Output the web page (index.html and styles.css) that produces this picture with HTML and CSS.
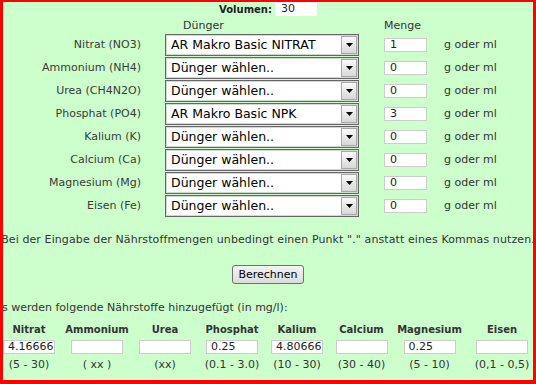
FILE: index.html
```html
<!DOCTYPE html>
<html lang="de">
<head>
    <meta charset="UTF-8">
    <title>Dünger Rechner</title>
    <link rel="stylesheet" href="styles.css">
</head>
<body>
    <div class="frame">
        <div class="volume">
            <b>Volumen:</b>
            <span class="field vol">30</span>
        </div>

        <div class="dosing">
            <div></div>
            <div class="head head-fert">Dünger</div>
            <div class="head">Menge</div>
            <div></div>

            <div class="label">Nitrat (NO3)</div>
            <div class="select"><span>AR Makro Basic NITRAT</span><span class="arrow"><svg width="7" height="4" viewBox="0 0 7 4"><path d="M0 0h7L3.5 4z" fill="#000"/></svg></span></div>
            <div class="field qty">1</div>
            <div class="unit">g oder ml</div>

            <div class="label">Ammonium (NH4)</div>
            <div class="select"><span>Dünger wählen..</span><span class="arrow"><svg width="7" height="4" viewBox="0 0 7 4"><path d="M0 0h7L3.5 4z" fill="#000"/></svg></span></div>
            <div class="field qty">0</div>
            <div class="unit">g oder ml</div>

            <div class="label">Urea (CH4N2O)</div>
            <div class="select"><span>Dünger wählen..</span><span class="arrow"><svg width="7" height="4" viewBox="0 0 7 4"><path d="M0 0h7L3.5 4z" fill="#000"/></svg></span></div>
            <div class="field qty">0</div>
            <div class="unit">g oder ml</div>

            <div class="label">Phosphat (PO4)</div>
            <div class="select"><span>AR Makro Basic NPK</span><span class="arrow"><svg width="7" height="4" viewBox="0 0 7 4"><path d="M0 0h7L3.5 4z" fill="#000"/></svg></span></div>
            <div class="field qty">3</div>
            <div class="unit">g oder ml</div>

            <div class="label">Kalium (K)</div>
            <div class="select"><span>Dünger wählen..</span><span class="arrow"><svg width="7" height="4" viewBox="0 0 7 4"><path d="M0 0h7L3.5 4z" fill="#000"/></svg></span></div>
            <div class="field qty">0</div>
            <div class="unit">g oder ml</div>

            <div class="label">Calcium (Ca)</div>
            <div class="select"><span>Dünger wählen..</span><span class="arrow"><svg width="7" height="4" viewBox="0 0 7 4"><path d="M0 0h7L3.5 4z" fill="#000"/></svg></span></div>
            <div class="field qty">0</div>
            <div class="unit">g oder ml</div>

            <div class="label">Magnesium (Mg)</div>
            <div class="select"><span>Dünger wählen..</span><span class="arrow"><svg width="7" height="4" viewBox="0 0 7 4"><path d="M0 0h7L3.5 4z" fill="#000"/></svg></span></div>
            <div class="field qty">0</div>
            <div class="unit">g oder ml</div>

            <div class="label">Eisen (Fe)</div>
            <div class="select"><span>Dünger wählen..</span><span class="arrow"><svg width="7" height="4" viewBox="0 0 7 4"><path d="M0 0h7L3.5 4z" fill="#000"/></svg></span></div>
            <div class="field qty">0</div>
            <div class="unit">g oder ml</div>
        </div>

        <div class="note"><span>Bei der Eingabe der Nährstoffmengen unbedingt einen Punkt "." anstatt eines Kommas nutzen.</span></div>

        <div class="actions"><button class="btn">Berechnen</button></div>

        <div class="result">
            <p class="intro">Es werden folgende Nährstoffe hinzugefügt (in mg/l):</p>
            <div class="values">
                <div class="col"><b>Nitrat</b><span class="field out">4.16666</span><span>(5 - 30)</span></div>
                <div class="col"><b>Ammonium</b><span class="field out"></span><span>( xx )</span></div>
                <div class="col"><b>Urea</b><span class="field out"></span><span>(xx)</span></div>
                <div class="col"><b>Phosphat</b><span class="field out">0.25</span><span>(0.1 - 3.0)</span></div>
                <div class="col"><b>Kalium</b><span class="field out">4.80666</span><span>(10 - 30)</span></div>
                <div class="col"><b>Calcium</b><span class="field out"></span><span>(30 - 40)</span></div>
                <div class="col"><b>Magnesium</b><span class="field out">0.25</span><span>(5 - 10)</span></div>
                <div class="col"><b>Eisen</b><span class="field out"></span><span>(0,1 - 0,5)</span></div>
            </div>
        </div>
    </div>
</body>
</html>
```

FILE: styles.css
```css
body { margin: 0; font-family: "DejaVu Sans", Verdana, sans-serif; font-size: 11px; color: #333; }
.frame { width: 536px; height: 384px; box-sizing: border-box; border: 3px solid #f00; border-top-width: 2px; border-bottom-width: 4px; background: #ccffcc; overflow: hidden; }

.field { display: block; box-sizing: border-box; height: 14px; background: #fff; border: 1px solid #ccc; padding: 0 5px; line-height: 12px; font-size: 11px; color: #222; white-space: nowrap; overflow: hidden; }

.volume { display: flex; justify-content: center; align-items: center; gap: 3px; height: 14px; color: #222; }
.volume b { font-size: 10px; }
.volume .vol { width: 42px; border-color: #fff; }

.dosing { display: grid; grid-template-columns: 162px 219px 60px auto; grid-template-rows: 17px; grid-auto-rows: 23px; align-items: center; }
.dosing .head { align-self: end; line-height: 14px; }
.dosing .head-fert { padding-left: 18px; }
.label { text-align: right; padding-right: 24px; color: #3a3a3a; }
.select { display: flex; align-items: center; justify-content: space-between; box-sizing: border-box; width: 194px; height: 22px; background: #fff; border: 1px solid #666; box-shadow: inset 0 0 0 1px #d6d6d6; font-size: 12.5px; color: #000; padding-left: 5px; }
.arrow { display: flex; align-items: center; justify-content: center; box-sizing: border-box; width: 16px; height: 18px; margin-right: 1px; border: 1px solid #a8a8a8; background: linear-gradient(#fafafa, #d8d8d8); }
.qty { width: 43px; }

.note { display: flex; justify-content: center; white-space: nowrap; letter-spacing: 0.1px; margin-top: 16px; }
.actions { display: flex; justify-content: center; margin-top: 19px; }
.btn { font-family: inherit; font-size: 11px; color: #000; height: 19px; padding: 0 5px; border: 1px solid #707070; border-radius: 3px; background: linear-gradient(#f4f4f4, #dcdcdc); }

.result { margin-left: -8px; margin-top: 17px; }
.intro { margin: 0; }
.values { display: grid; grid-template-columns: 68px 68px 68px 66px 64px 65px 71px 74px; margin-top: 10px; }
.col { display: flex; flex-direction: column; align-items: center; white-space: nowrap; }
.col b { font-size: 10px; margin-bottom: 5px; }
.col .out { width: 52px; padding: 0 4px; margin-bottom: 4px; }
```
